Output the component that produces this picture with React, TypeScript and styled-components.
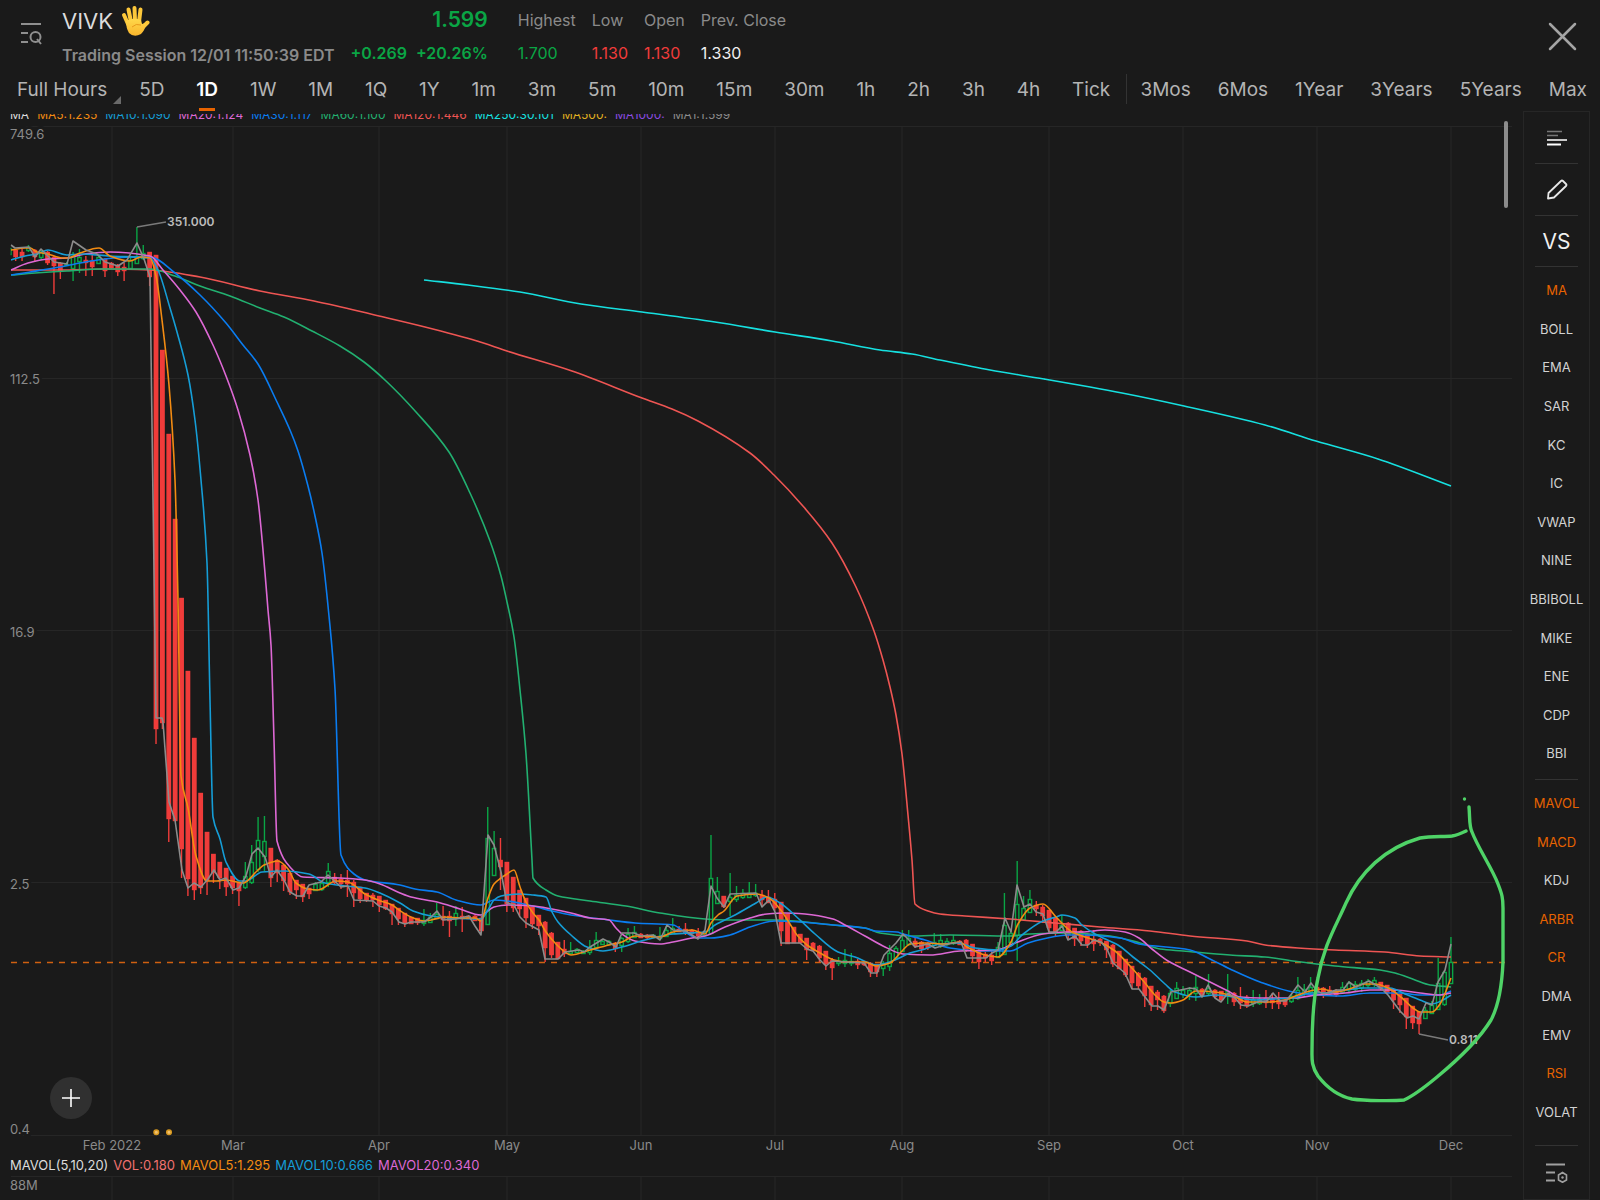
import React, { useState } from "react";
import styled, { createGlobalStyle } from "styled-components";

const color = {
  bg: "#1a1a1a",
  line: "#262626",
  divider: "#333333",
  text: "#dcdcdc",
  soft: "#b4b4b4",
  muted: "#8a8a8a",
  up: "#0aa545",
  down: "#f03c3a",
  accent: "#e86300",
};

const GlobalStyle = createGlobalStyle`
  * { box-sizing: border-box; }
  body { margin: 0; background: ${color.bg}; color: ${color.text}; font-family: Inter, "Liberation Sans", sans-serif; }
  button { font-family: inherit; background: none; border: 0; padding: 0; margin: 0; cursor: pointer; }
`;

const Page = styled.div`
  display: flex;
  flex-direction: column;
  min-height: 100vh;
`;

const Header = styled.header`
  display: flex;
  align-items: flex-start;
  height: 72px;
  padding: 0 20px;
`;

const MenuButton = styled.button`
  width: 42px;
  padding-top: 22px;
  text-align: left;
  line-height: 0;
`;

const Ticker = styled.h1`
  display: flex;
  align-items: center;
  gap: 8px;
  margin: 0;
  font-size: 22px;
  font-weight: 400;
  line-height: 42px;
`;

const Session = styled.p`
  margin: 0;
  font-size: 16px;
  font-weight: 600;
  line-height: 26px;
  color: ${color.muted};
`;

const Quote = styled.div`
  margin-left: 16px;
  text-align: right;
  color: ${color.up};
`;

const Price = styled.div`
  font-size: 21px;
  font-weight: 600;
  line-height: 40px;
`;

const Change = styled.div`
  display: flex;
  gap: 9px;
  font-size: 16px;
  font-weight: 600;
  line-height: 26px;
`;

const Stats = styled.dl`
  display: flex;
  flex: 1;
  gap: 16px;
  margin: 0 0 0 30px;
`;

const Stat = styled.div<{ $tone: string }>`
  font-size: 16px;
  dt { line-height: 40px; color: ${color.muted}; }
  dd { margin: 0; line-height: 26px; color: ${(p) => p.$tone}; }
`;

const CloseButton = styled.button`
  padding: 21px 3px 0 0;
  line-height: 0;
`;

const Tabs = styled.nav`
  display: flex;
  height: 39px;
  padding: 0 13px 0 17px;
`;

const TabGroup = styled.div<{ $grow: number }>`
  display: flex;
  flex: ${(p) => p.$grow} 1 0;
  justify-content: space-between;
`;

const TabDivider = styled.span`
  width: 1px;
  height: 30px;
  margin: 2px 13px 0 16px;
  background: ${color.divider};
`;

const Tab = styled.button<{ $active?: boolean }>`
  position: relative;
  height: 39px;
  padding-bottom: 4px;
  font-size: 19px;
  line-height: 35px;
  white-space: nowrap;
  font-weight: ${(p) => (p.$active ? 600 : 400)};
  color: ${(p) => (p.$active ? "#ffffff" : color.soft)};
  &::after {
    content: "";
    display: ${(p) => (p.$active ? "block" : "none")};
    position: absolute;
    left: 50%;
    bottom: 0;
    width: 16px;
    height: 3px;
    margin-left: -8px;
    background: ${color.accent};
  }
`;

const Corner = styled.i`
  position: absolute;
  right: -14px;
  bottom: 7px;
  border-left: 8px solid transparent;
  border-bottom: 8px solid #6a6a6a;
`;

const Body = styled.main`
  display: flex;
  flex: 1;
  padding-right: 10px;
`;

const ChartColumn = styled.section`
  position: relative;
  display: flex;
  flex-direction: column;
  flex: 1;
  min-width: 0;
  padding-top: 3px;
`;

const ClippedLegend = styled.div`
  display: flex;
  align-items: flex-end;
  gap: 8px;
  height: 9px;
  margin: 0 0 2px 10px;
  overflow: hidden;
  font-size: 12px;
  line-height: 17px;
  white-space: nowrap;
`;

const Legend = styled.div`
  display: flex;
  gap: 5px;
  height: 19px;
  padding-left: 10px;
  font-size: 13px;
  line-height: 18px;
  white-space: nowrap;
`;

const Tone = styled.span<{ $tone: string }>`
  color: ${(p) => p.$tone};
`;

const Plot = styled.svg`
  display: block;
  width: 100%;
  height: auto;
  text { font-family: Inter, "Liberation Sans", sans-serif; font-size: 13px; fill: ${color.muted}; }
`;

const MarkLabel = styled.text`
  && { font-size: 12px; font-weight: 600; fill: #bcbcbc; }
`;

const AddButton = styled.button`
  position: absolute;
  left: 50px;
  bottom: 81px;
  display: grid;
  place-items: center;
  width: 42px;
  height: 42px;
  border-radius: 50%;
  background: #303030;
`;

const ScrollThumb = styled.div`
  position: absolute;
  top: 10px;
  right: 15px;
  width: 4px;
  height: 87px;
  border-radius: 2px;
  background: #8c8c8c;
`;

const Sidebar = styled.aside`
  display: flex;
  flex-direction: column;
  width: 67px;
  border: 1px solid ${color.line};
`;

const Tool = styled.button<{ $height?: number }>`
  display: grid;
  place-items: center;
  height: ${(p) => p.$height ?? 51}px;
  font-size: 21px;
  color: #f0f0f0;
`;

const Rule = styled.hr`
  width: 43px;
  height: 1px;
  margin: 0 auto;
  border: 0;
  background: ${color.divider};
`;

const IndicatorList = styled.div<{ $rows: number; $end: number }>`
  display: flex;
  flex-direction: column;
  flex: ${(p) => p.$rows} 1 auto;
  padding: 4px 0 ${(p) => p.$end}px;
`;

const Indicator = styled.button<{ $on: boolean }>`
  flex: 1;
  font-size: 13px;
  color: ${(p) => (p.$on ? color.accent : "#d2d2d2")};
`;

/* ---------- data ---------- */

const MONTHS: [number, string][] = [
  [112, "Feb 2022"], [233, "Mar"], [379, "Apr"], [507, "May"], [641, "Jun"], [775, "Jul"],
  [902, "Aug"], [1049, "Sep"], [1183, "Oct"], [1317, "Nov"], [1451, "Dec"],
];

const LEVELS: [number, number, string][] = [
  [126, 139, "749.6"], [378, 384, "112.5"], [630, 637, "16.9"], [882, 889, "2.5"], [1135, 1134, "0.4"],
];

const AVERAGES: [string, string][] = [
  ["#ee5553", "11,270 60,270 105,269 150,270 200,277 260,291 314,301 379,316 425,327 477,341 507,351 572,371 642,398 672,409 698,421 750,453 774,475 802,505 832,543 856,587 874,631 883,660 890,687 896,715 902,754 908,815 912,860 915,904 928,911 940,914 965,916 1010,919 1055,923 1100,927 1150,931 1190,936 1247,941 1265,945 1298,948 1335,950 1385,952 1420,956 1451,957"],
  ["#22b070", "11,275 35,273 67,271 100,269 150,269 175,276 200,286 230,296 260,308 284,317 312,331 340,346 364,362 386,381 416,412 449,452 470,493 490,541 501,576 507,602 514,637 520,690 526,754 532,860 533,878 546,890 558,896 590,901 626,906 660,913 705,919 730,920 775,920 805,922 833,925 865,928 880,933 910,936 950,935 1010,936 1030,934 1070,933 1110,936 1140,943 1160,949 1183,951 1230,955 1265,957 1293,961 1335,966 1380,970 1395,973 1415,980 1430,985 1451,987"],
  ["#0a7cf0", "11,275 30,272 60,267 80,263 105,259 130,257 150,257 175,273 200,295 226,323 243,345 258,364 277,402 290,430 298,451 308,486 315,516 322,553 329,616 335,689 341,855 354,874 365,880 400,885 415,889 437,892 456,900 481,905 494,900 507,901 533,906 552,911 571,915 609,920 635,923 673,925 685,932 698,938 711,938 730,935 750,927 775,921 800,922 833,925 865,928 875,931 897,932 903,934 925,940 950,948 980,951 1010,951 1028,943 1043,939 1068,935 1085,935 1120,938 1139,944 1190,950 1208,958 1230,969 1260,982 1293,992 1317,995 1340,996 1370,993 1400,993 1420,995 1440,995 1451,991"],
  ["#dd68d4", "11,270 28,263 48,259 67,258 85,254 110,252 150,256 163,270 180,290 196,312 213,345 226,376 238,410 250,455 258,500 265,573 268,610 271,645 274,740 277,841 290,867 303,877 340,878 365,880 380,884 400,893 411,897 437,902 460,909 481,915 494,907 507,905 533,906 552,909 571,913 590,918 609,920 616,928 622,934 635,941 660,944 673,942 692,938 705,936 725,927 750,918 767,914 785,913 805,914 833,919 845,925 865,936 885,947 903,954 930,955 960,951 997,950 1015,943 1043,934 1065,932 1082,932 1105,930 1125,932 1139,938 1152,949 1168,961 1190,972 1210,982 1228,991 1240,997 1260,998 1293,998 1317,995 1345,993 1370,990 1395,990 1420,993 1440,995 1451,993"],
  ["#159dd6", "11,260 25,256 37,254 48,250 67,255 80,254 110,256 150,258 158,270 170,308 177,332 188,375 195,420 201,480 207,563 210,700 213,817 220,839 226,862 240,881 246,881 262,872 285,871 309,874 325,883 345,886 365,888 380,893 400,903 413,911 431,916 450,918 481,919 488,910 494,900 501,896 520,894 533,895 546,897 552,912 558,922 571,935 587,947 603,951 622,947 645,940 673,934 705,932 715,925 735,915 756,903 767,897 780,903 800,920 815,934 838,952 855,957 877,965 895,960 910,953 925,949 940,944 958,943 975,948 998,950 1011,946 1022,935 1043,921 1056,917 1062,915 1075,918 1082,925 1095,934 1118,945 1133,957 1150,970 1165,984 1175,992 1196,997 1215,995 1235,997 1255,1000 1275,999 1293,998 1310,993 1325,993 1345,990 1365,988 1390,988 1405,994 1420,1000 1432,1004 1443,1000 1451,995"],
  ["#f38b12", "11,250 25,248 30,248 37,252 48,254 62,258 68,258 80,253 99,248 110,256 130,261 141,257 150,258 156,276 162,320 169,385 175,480 178,600 181,776 188,808 196,856 207,881 217,881 226,880 243,883 258,870 264,865 278,861 288,869 296,883 308,889 318,890 336,881 348,882 365,894 378,900 392,905 399,910 411,917 424,921 431,920 445,917 460,918 475,918 481,921 488,898 494,884 501,878 507,874 514,870 520,887 526,902 533,913 539,920 546,932 556,944 565,952 571,955 590,950 609,945 622,942 635,936 660,937 673,932 692,930 705,934 711,923 718,915 724,911 737,896 757,894 769,898 780,909 790,924 797,935 807,945 820,953 834,960 846,962 865,962 876,966 890,963 903,950 910,944 925,943 945,944 960,942 967,947 985,955 998,957 1011,942 1018,924 1030,908 1043,904 1056,917 1072,932 1085,937 1100,942 1115,951 1130,966 1145,983 1156,996 1164,1002 1171,1003 1183,1000 1196,991 1215,992 1235,997 1247,1002 1270,1002 1285,1000 1298,995 1310,991 1322,989 1335,992 1349,989 1365,984 1375,984 1388,988 1402,998 1413,1008 1420,1012 1432,1012 1440,1004 1451,978"],
  ["#16e0e0", "424,280 468,285 520,292 581,304 642,312 715,322 775,332 832,341 880,350 912,354 940,360 990,370 1044,379 1122,393 1184,406 1265,425 1316,441 1378,459 1451,486"],
];

const CLOSES = "11,245 15,248 29,247 35,257 41,249 48,256 54,262 67,264 73,241 86,250 97,254 105,262 118,266 127,260 137,243 144,259 150,277 156,718 162,718 163,722 169,802 175,820 182,870 188,888 194,883 201,887 208,879 214,870 220,880 226,878 233,890 239,888 246,876 252,854 258,848 265,857 271,877 277,870 284,880 290,892 297,896 303,896 309,885 321,882 328,875 341,887 348,886 354,900 373,901 379,906 386,908 392,912 399,922 405,924 411,922 424,922 431,917 437,911 443,920 456,919 469,916 475,926 481,935 488,835 494,845 501,872 507,903 514,905 520,917 526,923 539,930 545,959 558,959 565,952 579,950 584,952 590,947 603,939 609,942 616,947 622,933 634,933 641,936 653,935 660,940 667,925 673,930 686,931 692,935 698,939 705,930 711,886 717,898 724,907 730,894 756,893 762,907 769,900 775,912 781,943 800,943 807,949 813,951 820,960 826,966 832,961 846,962 864,963 871,973 877,973 884,955 890,949 896,943 903,934 909,940 915,947 928,944 935,948 948,944 961,942 967,958 986,958 992,953 998,950 1005,918 1011,932 1017,885 1024,907 1030,904 1036,912 1043,914 1049,932 1056,932 1062,926 1068,940 1075,936 1082,945 1088,945 1094,940 1101,942 1107,949 1113,963 1125,973 1132,989 1139,989 1152,1006 1158,1006 1164,1010 1171,992 1190,988 1196,989 1202,997 1208,985 1215,998 1221,1002 1228,993 1235,998 1241,1005 1248,1006 1260,1001 1266,1002 1273,993 1280,1001 1286,1001 1293,992 1298,985 1305,992 1311,983 1317,991 1324,994 1336,990 1343,990 1349,982 1356,987 1369,981 1381,988 1388,995 1400,1011 1407,1018 1413,1016 1419,1019 1426,1003 1432,1005 1438,982 1445,970 1451,944";

/* One session per entry: direction, high, body top, body bottom, low. */
const CANDLES = `
g245 248 254 257|r249 250 256 261|r249 252 256 261|g245 247 250 252|r249 250 256 262|g249 252 257 260|r251 252 262 265|r256 257 265 294|r262 263 270 279|g262 264 265 266|
g252 256 268 281|g249 257 261 273|r256 260 262 276|r254 261 266 276|g255 257 263 264|r258 259 270 277|r262 263 267 269|r264 265 271 276|r263 267 270 281|g257 260 268 270|
g227 256 263 264|g245 253 258 260|r252 252 276 286|r255 255 728 744|r350 350 722 729|r434 434 818 842|r519 519 820 820|r598 598 848 878|r671 671 878 896|r738 738 889 900|
r793 793 887 894|r832 832 880 895|r854 854 872 883|r862 862 877 889|r868 868 886 896|r876 876 887 894|r882 883 890 906|g862 876 887 889|g845 862 882 884|g817 840 869 872|
g816 841 856 871|r848 848 877 887|r859 860 872 882|r865 865 880 891|r873 873 891 895|r880 880 889 899|r884 884 896 902|r888 888 893 899|g882 884 890 891|g882 883 889 891|
g863 871 882 887|r873 877 882 884|r874 879 883 889|r870 880 883 897|r880 882 892 907|r887 887 898 903|r893 893 899 902|r893 895 899 907|r896 896 904 912|r900 900 908 910|
r904 904 913 925|r908 908 918 925|r913 913 922 927|r917 917 923 924|r918 918 922 925|g909 920 923 926|g913 917 922 923|g903 914 918 919|r906 916 919 926|r911 916 920 937|
g906 913 917 926|r907 916 918 932|r915 916 918 919|r915 916 920 921|r916 918 930 933|g807 838 924 924|g831 848 875 875|r838 860 866 890|r862 862 903 912|r877 877 907 912|
r890 890 908 917|r898 898 917 928|r907 907 923 929|r915 915 925 935|r921 922 947 962|r932 933 954 958|r942 942 958 959|r940 949 953 957|g942 951 953 954|g948 949 952 953|
g950 951 953 954|g940 947 952 955|g932 940 947 948|g939 941 944 945|g940 941 944 945|r942 943 948 952|g937 938 945 952|g928 934 941 943|g926 932 937 938|r933 934 937 938|
r934 935 937 939|g934 935 937 938|g927 936 938 939|g926 930 936 937|g918 928 933 934|r926 929 931 932|r923 929 932 935|r929 930 933 934|r928 932 935 938|g930 932 935 937|
g835 878 933 934|g877 891 903 904|r896 896 906 908|g873 897 901 916|g886 895 899 902|g889 893 897 899|g882 893 897 898|g884 893 895 897|r890 895 899 907|r890 897 902 903|
r893 899 907 911|r902 902 930 946|r914 914 943 944|r927 927 942 943|r934 934 942 943|r938 938 949 960|r942 943 950 951|r945 946 957 962|r951 951 963 970|r958 960 967 980|
g957 961 963 966|g949 960 963 967|g953 961 963 966|r959 961 964 969|r961 962 964 966|r962 963 971 977|r964 964 971 977|g961 963 968 976|g945 953 966 971|g946 948 958 960|
g930 940 951 952|g930 938 944 946|r937 941 945 948|r941 942 948 953|r942 943 947 950|g933 942 945 946|g934 940 945 948|g938 941 944 946|g935 940 943 945|r940 941 944 945|
r939 940 950 952|r944 944 955 962|r949 950 961 969|r952 954 957 962|r950 955 960 965|g942 947 957 958|g893 925 954 954|g930 933 942 944|g861 904 935 961|g896 908 919 919|
g890 899 912 913|r901 905 908 916|r905 907 915 923|r910 910 927 933|r918 918 931 936|g915 925 930 931|r922 923 934 940|r928 928 938 946|r930 931 940 946|r933 934 943 948|
r930 939 943 951|r938 939 942 946|r941 941 949 958|r944 945 963 967|r951 951 968 969|r959 959 974 977|r966 966 982 989|r972 973 985 989|r977 978 995 1007|r986 986 1004 1011|
r990 992 999 1010|r995 996 1010 1013|g990 993 1003 1007|g982 988 998 999|g986 990 994 998|g987 990 994 1000|g976 987 993 1001|r988 989 995 997|g974 988 993 996|r989 990 996 998|
r991 991 999 1002|g974 991 995 1004|r992 993 1001 1006|r987 997 1002 1009|r995 997 1005 1008|g990 999 1003 1007|g994 999 1003 1005|r990 998 1002 1008|r993 999 1002 1009|r992 1000 1003 1009|
r998 1000 1004 1007|g994 996 1001 1003|g977 990 998 1000|g984 989 993 996|g977 987 992 994|r984 987 992 995|r987 988 994 998|r986 990 993 996|r989 991 994 997|g982 987 992 993|
g981 983 989 993|g981 984 989 992|g980 983 987 992|g979 981 985 988|g977 980 984 987|r982 982 988 990|r985 985 992 994|r990 990 999 1009|r994 994 1004 1013|r998 998 1016 1029|
r1006 1006 1022 1029|r1012 1012 1023 1034|g1007 1010 1018 1019|g1001 1005 1013 1014|g958 983 1009 1010|g970 972 1004 1006|g937 962 983 984`
  .trim()
  .split("|")
  .map((entry) => {
    const e = entry.trim();
    const [high, top, bottom, low] = e.slice(1).split(" ").map(Number);
    return { up: e[0] === "g", high, top, bottom, low };
  });

const FIRST_X = 9.3;
const STEP = 6.379;

/* Monotone cubic through the points: smooth arcs that never overshoot at a kink. */
function smoothPath(points: string) {
  const p = points.split(" ").map((s) => s.split(",").map(Number));
  const n = p.length;
  const slope = p.slice(1).map((q, i) => (q[1] - p[i][1]) / (q[0] - p[i][0]));
  const tangent = p.map((_, i) => {
    if (i === 0) return slope[0];
    if (i === n - 1) return slope[n - 2];
    const a = slope[i - 1];
    const b = slope[i];
    return a * b <= 0 ? 0 : (2 * a * b) / (a + b);
  });
  let d = `M${p[0][0]} ${p[0][1]}`;
  for (let i = 0; i < n - 1; i++) {
    const h = (p[i + 1][0] - p[i][0]) / 3;
    d += `C${(p[i][0] + h).toFixed(2)} ${(p[i][1] + tangent[i] * h).toFixed(2)} ${(p[i + 1][0] - h).toFixed(2)} ${(p[i + 1][1] - tangent[i + 1] * h).toFixed(2)} ${p[i + 1][0]} ${p[i + 1][1]}`;
  }
  return d;
}

const PRICE_TABS = ["5D", "1D", "1W", "1M", "1Q", "1Y", "1m", "3m", "5m", "10m", "15m", "30m", "1h", "2h", "3h", "4h", "Tick"];
const RANGE_TABS = ["3Mos", "6Mos", "1Year", "3Years", "5Years", "Max"];

const STATS: [string, string, string][] = [
  ["Highest", "1.700", color.up],
  ["Low", "1.130", color.down],
  ["Open", "1.130", color.down],
  ["Prev. Close", "1.330", "#f0f0f0"],
];

const MA_LEGEND: [string, string][] = [
  ["MA", color.text], ["MA5:1.235", "#f38b12"], ["MA10:1.090", "#159dd6"], ["MA20:1.124", "#dd68d4"],
  ["MA30:1.117", "#0a7cf0"], ["MA60:1.100", "#22b070"], ["MA120:1.446", "#ee5553"], ["MA250:30.101", "#16e0e0"],
  ["MA500:", "#e0b020"], ["MA1000:", "#8a4be0"], ["MA1:1.599", "#8c8c8c"],
];

const VOL_LEGEND: [string, string][] = [
  ["MAVOL(5,10,20)", color.text], ["VOL:0.180", "#f0716f"], ["MAVOL5:1.295", "#f38b12"],
  ["MAVOL10:0.666", "#159dd6"], ["MAVOL20:0.340", "#dd68d4"],
];

const MAIN = ["MA", "BOLL", "EMA", "SAR", "KC", "IC", "VWAP", "NINE", "BBIBOLL", "MIKE", "ENE", "CDP", "BBI"];
const SUB = ["MAVOL", "MACD", "KDJ", "ARBR", "CR", "DMA", "EMV", "RSI", "VOLAT"];

/* ---------- drawings ---------- */

const HandIcon = () => (
  <svg width="29" height="32" viewBox="0 0 29 32" aria-hidden="true">
    <defs>
      <linearGradient id="skin" x1="0" y1="0" x2="0" y2="1">
        <stop offset="0" stopColor="#ffd84a" />
        <stop offset="1" stopColor="#f9b52c" />
      </linearGradient>
    </defs>
    <g stroke="#fdc83a" strokeWidth="4" strokeLinecap="round" fill="none">
      <path d="M7 19 L3 10" />
      <path d="M10 17 L7.500 4.500" />
      <path d="M14 16 L13.500 3" />
      <path d="M18 17 L19.500 4.500" />
      <path d="M20 24 L26.500 17.500" />
    </g>
    <path d="M5 16 Q12 12 20 15 L21 19 Q23 18 25 19 Q24 25 20 29 Q13 33 8 28 Q5 23 5 16Z" fill="url(#skin)" />
    <path d="M11 22 Q15 18 20 20" stroke="#e89a1c" strokeWidth="1" fill="none" />
  </svg>
);

const ListSearchIcon = () => (
  <svg width="22" height="24" viewBox="0 0 22 24" fill="none" stroke="#8f8f8f" strokeWidth="2" aria-hidden="true">
    <path d="M1 2H21M1 11H8M1 20H8" />
    <circle cx="15.500" cy="15" r="5" />
    <path d="M17 17L21 22" />
  </svg>
);

const CloseIcon = () => (
  <svg width="29" height="30" viewBox="0 0 29 30" stroke="#a4a4a4" strokeWidth="2.500" strokeLinecap="round" aria-hidden="true">
    <path d="M2 3L27 28M27 3L2 28" />
  </svg>
);

const LinesIcon = () => (
  <svg width="20" height="16" viewBox="0 0 20 16" aria-hidden="true">
    <path d="M0 1.500H15M0 5.500H11" stroke="#777777" strokeWidth="1.500" />
    <path d="M0 10H20" stroke="#c8c8c8" strokeWidth="2" />
    <path d="M0 14.500H14" stroke="#ffffff" strokeWidth="2" />
  </svg>
);

const PencilIcon = () => (
  <svg width="22" height="22" viewBox="0 1 22 22" fill="none" stroke="#e8e8e8" strokeWidth="1.800" strokeLinejoin="round" aria-hidden="true">
    <path d="M2 20.500L2.500 15L15 3Q16 2 17 3L20 6Q21 7 20 8L8 19.500Z" />
  </svg>
);

const SettingsIcon = () => (
  <svg width="22" height="20" viewBox="0 0 22 20" fill="none" stroke="#a0a0a0" strokeWidth="2" aria-hidden="true">
    <path d="M0 1.500H19M0 9.500H9M0 17.500H9" />
    <path d="M16.500 9.500L20.500 12V17L16.500 19.300L12.500 17V12Z" strokeWidth="1.600" />
    <circle cx="16.500" cy="14.500" r="1.200" fill="#a0a0a0" stroke="none" />
  </svg>
);

const PriceChart = () => (
  <Plot viewBox="0 125 1523 1031" role="img" aria-label="VIVK daily price">
    <defs>
      <clipPath id="plot-area"><rect x="10.500" y="125" width="1502" height="1012" /></clipPath>
    </defs>
    <g stroke={color.line}>
      {MONTHS.map(([x]) => <line key={x} x1={x} x2={x} y1={126} y2={1135} />)}
      {LEVELS.map(([y]) => <line key={y} x1={11} x2={1512} y1={y + 0.5} y2={y + 0.5} />)}
    </g>
    {LEVELS.map(([, y, label]) => (
      <text key={label} x={10} y={y} stroke={color.bg} strokeWidth={6} paintOrder="stroke">{label}</text>
    ))}
    {MONTHS.map(([x, label]) => <text key={label} x={x} y={1150} textAnchor="middle">{label}</text>)}
    <path d="M11 962.500H1510" stroke="#d06010" strokeWidth="1.500" strokeDasharray="6 6" />
    <g clipPath="url(#plot-area)">
      {CANDLES.map((c, i) => {
        const x = FIRST_X + i * STEP;
        const tone = c.up ? color.up : color.down;
        const h = Math.max(1, c.bottom - c.top);
        return (
          <g key={i} stroke={tone} strokeWidth={1.4}>
            <path d={`M${x} ${c.high}V${c.low}`} />
            <rect x={x - 1.7} y={c.top + 0.5} width={3.4} height={h} fill={c.up ? color.bg : tone} />
          </g>
        );
      })}
      <g fill="none" strokeWidth="1.600" strokeLinejoin="round">
        {AVERAGES.map(([tone, points]) => <path key={tone} stroke={tone} d={smoothPath(points)} />)}
        <polyline stroke="#8c8c8c" points={CLOSES} />
      </g>
    </g>
    <path d="M137 227L166 222M1419 1034L1448 1040" stroke="#7a7a7a" strokeWidth="1.300" />
    <MarkLabel x={167} y={226}>351.000</MarkLabel>
    <MarkLabel x={1449} y={1044}>0.811</MarkLabel>
    <g fill="#f0c070" stroke="#d99a20" strokeWidth="1.500">
      <circle cx="156.300" cy="1132.300" r="2.300" />
      <circle cx="169" cy="1132.300" r="2.300" />
    </g>
    <circle cx="1464.500" cy="799" r="1.700" fill="#4fd367" />
    <path
      d="M1469 807C1470 818 1469 826 1472 832C1478 848 1492 868 1498 884C1502 894 1503 898 1503 908L1503 962C1502 985 1499 1005 1491 1020C1480 1038 1460 1058 1437 1077C1425 1087 1415 1095 1404 1100C1395 1101 1365 1101 1352 1099C1338 1096 1328 1089 1318 1076C1311 1066 1312 1058 1312 1050C1312 1020 1313 1000 1318 978C1324 945 1335 928 1346 903C1360 872 1385 848 1420 838C1432 836 1444 837 1452 836C1458 835 1462 833 1466 831"
      fill="none" stroke="#4fd367" strokeWidth="3.400" strokeLinecap="round"
    />
  </Plot>
);

const VolumeChart = () => (
  <Plot viewBox="0 1175 1523 25" role="img" aria-label="Volume">
    <g stroke={color.line}>
      <line x1={11} x2={1512} y1={1176.5} y2={1176.5} />
      {MONTHS.map(([x]) => <line key={x} x1={x} x2={x} y1={1176} y2={1200} />)}
    </g>
    <text x={10} y={1190}>88M</text>
  </Plot>
);

export default function App() {
  const [tab, setTab] = useState("1D");
  const [on, setOn] = useState(["MA", "MAVOL", "MACD", "ARBR", "CR", "RSI"]);
  const toggle = (name: string) =>
    setOn((list) => (list.includes(name) ? list.filter((n) => n !== name) : [...list, name]));
  const renderTab = (name: string) => (
    <Tab key={name} $active={tab === name} onClick={() => setTab(name)}>{name}</Tab>
  );
  const renderIndicator = (name: string) => (
    <Indicator key={name} $on={on.includes(name)} onClick={() => toggle(name)}>{name}</Indicator>
  );

  return (
    <Page>
      <GlobalStyle />
      <Header>
        <MenuButton aria-label="Search list"><ListSearchIcon /></MenuButton>
        <div>
          <Ticker>VIVK <HandIcon /></Ticker>
          <Session>Trading Session 12/01 11:50:39 EDT</Session>
        </div>
        <Quote>
          <Price>1.599</Price>
          <Change><span>+0.269</span><span>+20.26%</span></Change>
        </Quote>
        <Stats>
          {STATS.map(([label, value, tone]) => (
            <Stat key={label} $tone={tone}><dt>{label}</dt><dd>{value}</dd></Stat>
          ))}
        </Stats>
        <CloseButton aria-label="Close"><CloseIcon /></CloseButton>
      </Header>
      <Tabs>
        <TabGroup $grow={1092}>
          <Tab>Full Hours<Corner /></Tab>
          {PRICE_TABS.map(renderTab)}
        </TabGroup>
        <TabDivider />
        <TabGroup $grow={446}>{RANGE_TABS.map(renderTab)}</TabGroup>
      </Tabs>
      <Body>
        <ChartColumn>
          <ClippedLegend>
            {MA_LEGEND.map(([label, tone]) => <Tone key={label} $tone={tone}>{label}</Tone>)}
          </ClippedLegend>
          <PriceChart />
          <Legend>
            {VOL_LEGEND.map(([label, tone]) => <Tone key={label} $tone={tone}>{label}</Tone>)}
          </Legend>
          <VolumeChart />
          <AddButton aria-label="Add indicator">
            <svg width="18" height="18" viewBox="0 0 18 18" stroke="#ffffff" strokeWidth="1.600" aria-hidden="true">
              <path d="M9 0V18M0 9H18" />
            </svg>
          </AddButton>
          <ScrollThumb />
        </ChartColumn>
        <Sidebar>
          <Tool aria-label="Chart layout"><LinesIcon /></Tool>
          <Rule />
          <Tool aria-label="Draw"><PencilIcon /></Tool>
          <Rule />
          <Tool $height={50}>VS</Tool>
          <Rule />
          <IndicatorList $rows={13} $end={6}>{MAIN.map(renderIndicator)}</IndicatorList>
          <Rule />
          <IndicatorList $rows={9} $end={14}>{SUB.map(renderIndicator)}</IndicatorList>
          <Rule />
          <Tool $height={53} aria-label="Indicator settings"><SettingsIcon /></Tool>
        </Sidebar>
      </Body>
    </Page>
  );
}
